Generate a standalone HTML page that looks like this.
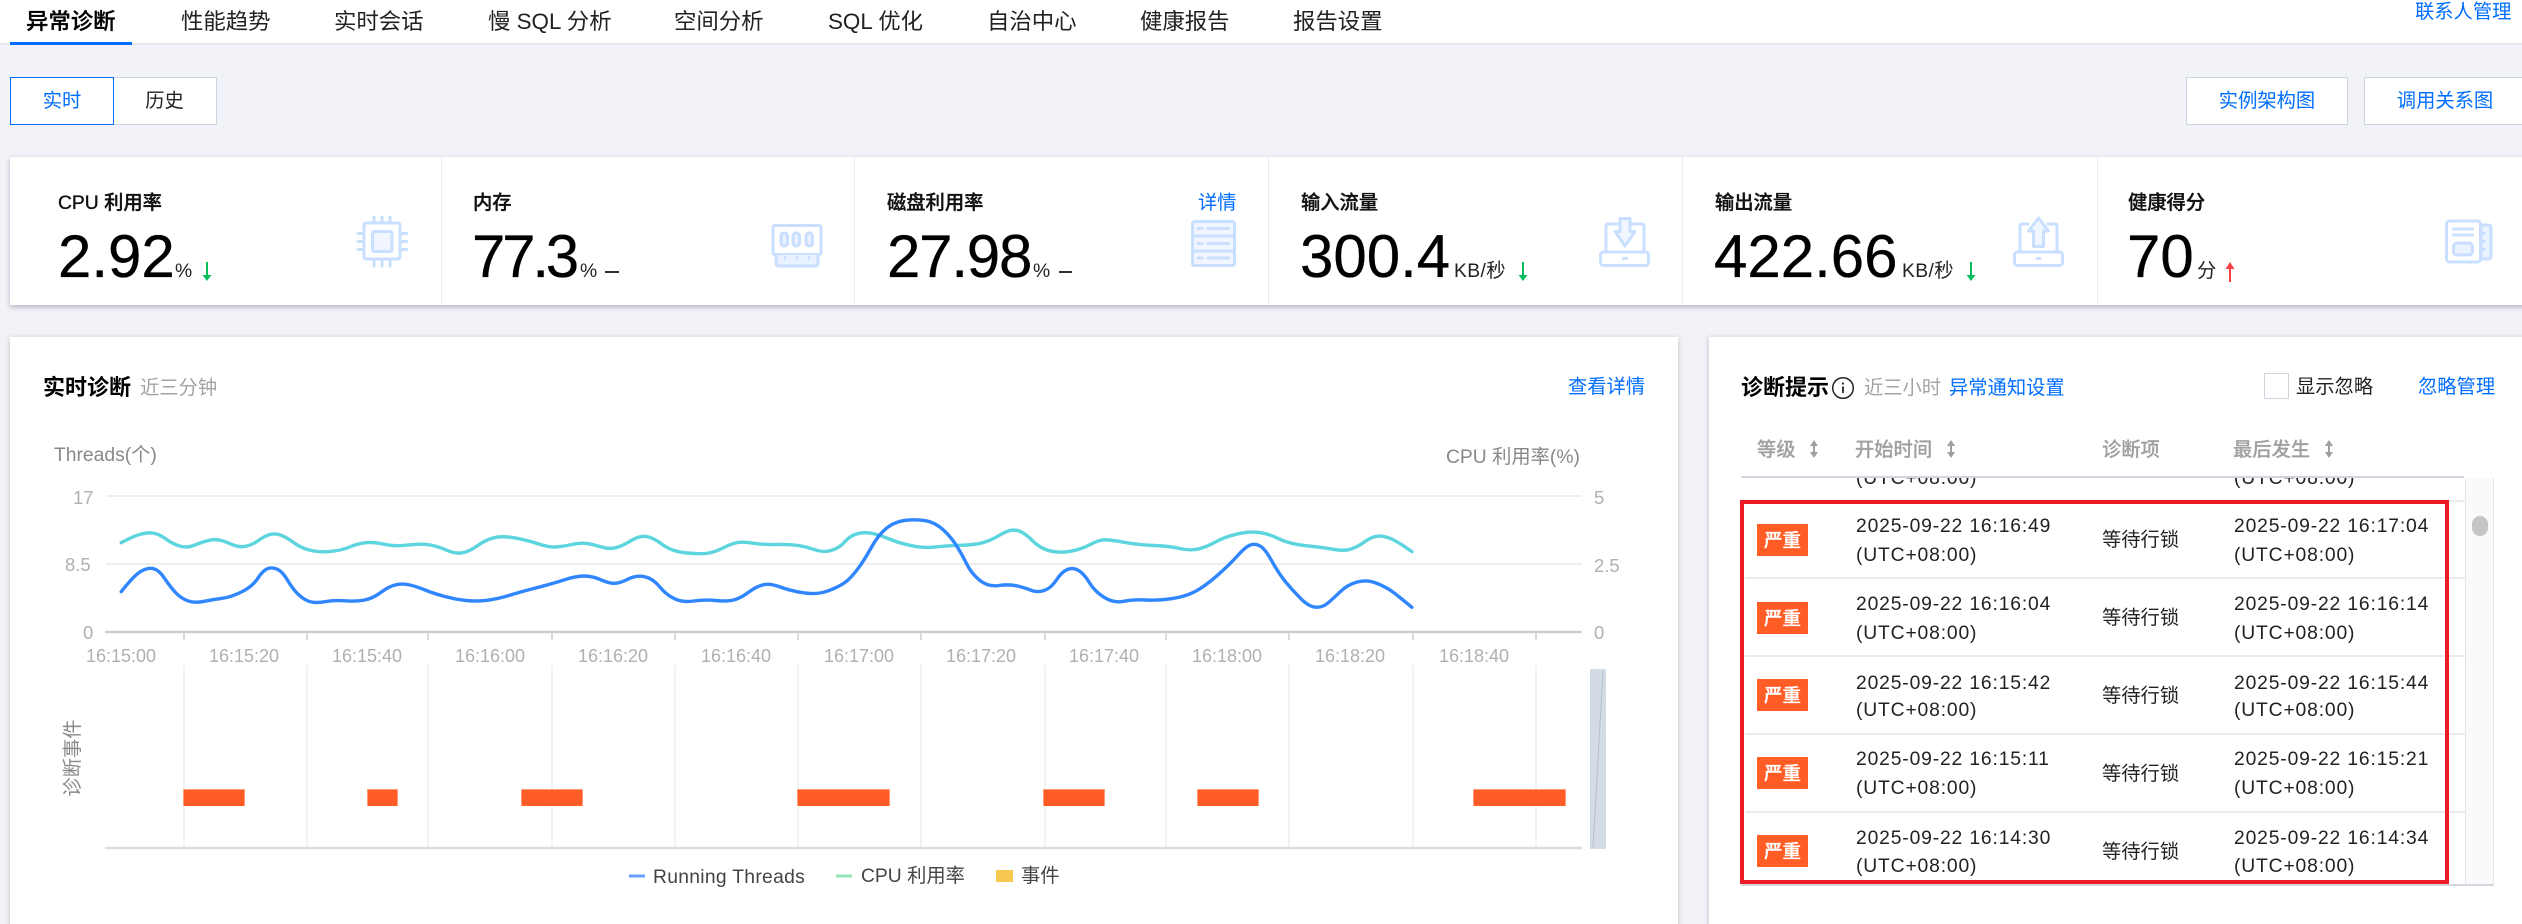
<!DOCTYPE html>
<html lang="zh-CN">
<head>
<meta charset="utf-8">
<title>异常诊断</title>
<style>
html,body{margin:0;padding:0;width:2522px;height:924px;overflow:hidden;background:#f2f3f8;}
body{position:relative;font-family:"Liberation Sans","Noto Sans CJK SC",sans-serif;color:#333;}
.b{position:absolute;box-sizing:border-box;}
.t{position:absolute;white-space:nowrap;line-height:24px;height:24px;font-size:19.3px;margin-top:1.5px;}
.nav{font-size:22.4px;line-height:30px;height:30px;top:5px;color:#222;}
.blue{color:#006eff;}
.gray{color:#a3a3a3;}
.title{font-weight:500;color:#111;-webkit-text-stroke:.35px #111;}
.big{font-size:60px;line-height:60px;height:60px;top:225px;color:#000;-webkit-text-stroke:.3px #000;}
.unit{top:258px;color:#222;}
.ax{font-size:18px;color:#b0b0b0;top:642px;text-align:center;width:100px;}
.yl{font-size:18.5px;color:#b0b0b0;}
.h{font-weight:500;color:#a0a0a0;top:437px;-webkit-text-stroke:.2px #a0a0a0;}
.d{color:#222;letter-spacing:.85px;}
.badge{position:absolute;left:1757px;width:51px;height:32px;background:#ff5c26;color:#fff;font-size:18.5px;font-weight:500;line-height:33px;text-align:center;-webkit-text-stroke:.3px #fff;}
.bar{position:absolute;top:789px;height:17px;background:#ff5c26;box-shadow:inset 0 1px 0 #ff9c7c,inset 1px 0 0 #ff9c7c,inset -1px 0 0 #ff9c7c;}
.sep{position:absolute;left:1745px;width:720px;height:2px;background:#e8ebf0;}
.btn{position:absolute;top:77px;height:48px;background:#fff;border:1.5px solid #cfd5de;text-align:center;line-height:47px;font-size:19.3px;box-sizing:border-box;}
</style>
</head>
<body>
<!-- nav -->
<div class="b" style="left:0;top:0;width:2522px;height:45px;background:#fff;border-bottom:2px solid #e6e8ed;"></div>
<div class="b" style="left:10px;top:42px;width:122px;height:3px;background:#006eff;"></div>
<span class="t nav" style="left:26px;font-weight:500;color:#000;-webkit-text-stroke:.3px #000;">异常诊断</span>
<span class="t nav" style="left:181px;">性能趋势</span>
<span class="t nav" style="left:334px;">实时会话</span>
<span class="t nav" style="left:488px;">慢 SQL 分析</span>
<span class="t nav" style="left:674px;">空间分析</span>
<span class="t nav" style="left:828px;">SQL 优化</span>
<span class="t nav" style="left:987px;">自治中心</span>
<span class="t nav" style="left:1140px;">健康报告</span>
<span class="t nav" style="left:1293px;">报告设置</span>
<span class="t blue" style="left:2415px;top:-1px;">联系人管理</span>

<!-- buttons -->
<div class="btn" style="left:112px;width:105px;color:#222;">历史</div>
<div class="btn blue" style="left:10px;width:104px;border:1.5px solid #006eff;">实时</div>
<div class="btn blue" style="left:2186px;width:162px;">实例架构图</div>
<div class="btn blue" style="left:2364px;width:162px;">调用关系图</div>

<!-- metric card -->
<div class="b" style="left:10px;top:157px;width:2530px;height:148px;background:#fff;box-shadow:0 2px 5px rgba(54,58,80,.35);"></div>
<div class="b" style="left:441px;top:157px;width:1px;height:148px;background:#e8ebf0;"></div>
<div class="b" style="left:854px;top:157px;width:1px;height:148px;background:#e8ebf0;"></div>
<div class="b" style="left:1268px;top:157px;width:1px;height:148px;background:#e8ebf0;"></div>
<div class="b" style="left:1682px;top:157px;width:1px;height:148px;background:#e8ebf0;"></div>
<div class="b" style="left:2097px;top:157px;width:1px;height:148px;background:#e8ebf0;"></div>

<span class="t title" style="left:58px;top:190px;">CPU 利用率</span>
<span class="t title" style="left:473px;top:190px;">内存</span>
<span class="t title" style="left:887px;top:190px;">磁盘利用率</span>
<span class="t blue" style="left:1198px;top:190px;">详情</span>
<span class="t title" style="left:1301px;top:190px;">输入流量</span>
<span class="t title" style="left:1715px;top:190px;">输出流量</span>
<span class="t title" style="left:2128px;top:190px;">健康得分</span>

<span class="t big" style="left:58px;">2.92</span><span class="t unit" style="left:175px;">%</span>
<span class="t big" style="left:472px;letter-spacing:-3.2px;">77.3</span><span class="t unit" style="left:580px;">%</span>
<span class="t big" style="left:887px;letter-spacing:-1.2px;">27.98</span><span class="t unit" style="left:1033px;">%</span>
<span class="t big" style="left:1300px;">300.4</span><span class="t unit" style="left:1454px;letter-spacing:.4px;">KB/秒</span>
<span class="t big" style="left:1714px;">422.66</span><span class="t unit" style="left:1902px;letter-spacing:.4px;">KB/秒</span>
<span class="t big" style="left:2127px;">70</span><span class="t unit" style="left:2197px;">分</span>
<div class="b" style="left:605px;top:271px;width:14px;height:2px;background:#333;"></div>
<div class="b" style="left:1059px;top:271px;width:13px;height:2px;background:#333;"></div>

<svg class="b" style="left:0;top:0;" width="2522" height="924" viewBox="0 0 2522 924" fill="none">
  <!-- arrows -->
  <g stroke="#0abf5b" stroke-width="2" fill="#0abf5b">
    <path d="M207 262V276"/><path d="M202.500 275h9l-4.500 6z" stroke="none"/>
    <path d="M1523 262V276"/><path d="M1518.500 275h9l-4.500 6z" stroke="none"/>
    <path d="M1971 262V276"/><path d="M1966.500 275h9l-4.500 6z" stroke="none"/>
  </g>
  <g stroke="#f64041" stroke-width="2" fill="#f64041">
    <path d="M2230 268V282"/><path d="M2225.500 269h9l-4.500 -7z" stroke="none"/>
  </g>
  <!-- CPU icon -->
  <g stroke="#c9dfff" stroke-width="3" stroke-linecap="round" stroke-linejoin="round">
    <rect x="364" y="223" width="36" height="36" rx="2"/>
    <rect x="372.500" y="231.500" width="19.500" height="20" rx="2" fill="#f0f5ff"/>
    <path d="M374 217v5M382 217v5M390 217v5M374 261v5M382 261v5M390 261v5M358 233.500h5M358 241.500h5M358 249.500h5M402 233.500h5M402 241.500h5M402 249.500h5"/>
  </g>
  <!-- memory icon -->
  <g stroke="#c9dfff" stroke-width="3" stroke-linejoin="round">
    <rect x="773" y="225.500" width="48" height="29" rx="2"/>
    <path d="M776 255v8q0 3 3 3h36q3 0 3-3v-8" fill="#e8f1ff"/>
    <rect x="781" y="233" width="6.500" height="13" rx="3" fill="#e8f1ff"/>
    <rect x="793" y="233" width="6.500" height="13" rx="3" fill="#e8f1ff"/>
    <rect x="806" y="233" width="6.500" height="13" rx="3" fill="#e8f1ff"/>
    <path d="M785 256v4M797 256v4M809 256v4" stroke-width="2"/>
  </g>
  <!-- disk icon -->
  <g stroke="#c9dfff" stroke-width="3" stroke-linejoin="round" stroke-linecap="round">
    <rect x="1192.500" y="221.500" width="42" height="44" rx="2" fill="#f0f5ff"/>
    <path d="M1193 236h41M1193 251h41"/>
    <path d="M1198 228.500h4M1208 228.500h21M1198 243.500h4M1208 243.500h21M1198 258h4M1208 258h21"/>
  </g>
  <!-- input icon -->
  <g stroke="#c9dfff" stroke-width="3" stroke-linejoin="round" stroke-linecap="round">
    <rect x="1600.500" y="252" width="48" height="13.500" rx="3"/>
    <path d="M1618 224h-10q-2 0-2 2v26M1632 224h10q2 0 2 2v26"/>
    <path d="M1620 218.500h10v13h5l-10 14.500-10-14.500h5z" fill="#f0f5ff"/>
    <path d="M1623.500 258.500h3"/>
  </g>
  <!-- output icon -->
  <g stroke="#c9dfff" stroke-width="3" stroke-linejoin="round" stroke-linecap="round">
    <rect x="2014.500" y="252" width="48" height="13.500" rx="3"/>
    <path d="M2028 224h-6q-2 0-2 2v26M2048 224h7q2 0 2 2v26"/>
    <path d="M2038.500 218l10 13h-5v15.500h-10v-15.500h-5z" fill="#f0f5ff"/>
    <path d="M2037 258.500h3"/>
  </g>
  <!-- health icon -->
  <g stroke="#c9dfff" stroke-width="3" stroke-linejoin="round" stroke-linecap="round">
    <path d="M2481 225h7q3 0 3 3v28q0 3-3 3h-7z" fill="#eaf2ff"/>
    <rect x="2446.500" y="221" width="34" height="41" rx="3"/>
    <path d="M2453.500 229h19M2453.500 235h19"/>
    <rect x="2453.500" y="243" width="19" height="12" rx="3.500" fill="#eaf2ff"/>
    <path d="M2481 233.500h3M2481 241.500h3M2481 249.500h3"/>
  </g>
</svg>

<!-- left panel -->
<div class="b" style="left:10px;top:337px;width:1668px;height:600px;background:#fff;box-shadow:0 1px 5px rgba(54,58,80,.3);"></div>
<span class="t title" style="left:43px;top:374px;font-size:22px;font-weight:700;color:#000;-webkit-text-stroke:0;">实时诊断</span>
<span class="t gray" style="left:140px;top:375px;">近三分钟</span>
<span class="t blue" style="left:1568px;top:374px;">查看详情</span>
<span class="t" style="left:54px;top:442px;color:#888;">Threads(个)</span>
<span class="t" style="left:1446px;top:444px;color:#888;">CPU 利用率(%)</span>
<span class="t yl" style="left:73px;top:484px;">17</span>
<span class="t yl" style="left:65px;top:551px;">8.5</span>
<span class="t yl" style="left:83px;top:619px;">0</span>
<span class="t yl" style="left:1594px;top:484px;">5</span>
<span class="t yl" style="left:1594px;top:552px;">2.5</span>
<span class="t yl" style="left:1594px;top:619px;">0</span>
<span class="t ax" style="left:71px;">16:15:00</span>
<span class="t ax" style="left:194px;">16:15:20</span>
<span class="t ax" style="left:317px;">16:15:40</span>
<span class="t ax" style="left:440px;">16:16:00</span>
<span class="t ax" style="left:563px;">16:16:20</span>
<span class="t ax" style="left:686px;">16:16:40</span>
<span class="t ax" style="left:809px;">16:17:00</span>
<span class="t ax" style="left:931px;">16:17:20</span>
<span class="t ax" style="left:1054px;">16:17:40</span>
<span class="t ax" style="left:1177px;">16:18:00</span>
<span class="t ax" style="left:1300px;">16:18:20</span>
<span class="t ax" style="left:1424px;">16:18:40</span>

<svg class="b" style="left:0;top:0;" width="2522" height="924" viewBox="0 0 2522 924" fill="none">
  <path d="M106 496H1582M106 564H1582" stroke="#eeeeee" stroke-width="2"/>
  <path d="M105 632H1582" stroke="#cfcfcf" stroke-width="2.500"/>
  <path d="M184 632v8M307 632v8M428 632v8M552 632v8M675 632v8M798 632v8M921 632v8M1045 632v8M1166 632v8M1289 632v8M1413 632v8M1536 632v8" stroke="#cfcfcf" stroke-width="1.500"/>
  <path d="M184 665V848M307 665V848M428 665V848M552 665V848M675 665V848M798 665V848M921 665V848M1045 665V848M1166 665V848M1289 665V848M1413 665V848M1536 665V848" stroke="#eeeeee" stroke-width="1.500"/>
  <path d="M105 848H1582" stroke="#dcdcdc" stroke-width="2.500"/>
  <g transform="translate(0,330) scale(.5485,.33333)" stroke-width="3.400" stroke-linejoin="round" stroke-linecap="round">
    <path vector-effect="non-scaling-stroke" stroke="#5dd5de" d="M221 638Q245 617 257.500 612Q270 607 280 609.500Q290 612 302.500 627Q315 642 327.500 648Q340 654 350 648Q360 642 372.500 635Q385 628 395 629Q405 630 420 641.500Q435 653 447.500 649Q460 645 472.500 630Q485 615 495 612.500Q505 610 515 617.500Q525 625 537.500 640Q550 655 567.500 661.500Q585 668 605 664Q625 660 637.500 651Q650 642 665 638.500Q680 635 700 642.500Q720 650 745 645Q770 640 785 645Q800 650 815 661Q830 672 842.500 668.500Q855 665 870 647.500Q885 630 900 623.500Q915 617 937.500 623.500Q960 630 980 641Q1000 652 1012.500 651Q1025 650 1042.500 643.500Q1060 637 1072.500 641Q1085 645 1097.500 651.500Q1110 658 1122.500 653Q1135 648 1150 632.500Q1165 617 1177.500 619.500Q1190 622 1207.500 643.500Q1225 665 1252.500 669Q1280 673 1292.500 669Q1305 665 1320 652.500Q1335 640 1345 637.500Q1355 635 1372.500 639.500Q1390 644 1415 643.500Q1440 643 1455 646.500Q1470 650 1485 659Q1500 668 1515 661.500Q1530 655 1540.500 635Q1551 615 1566 610Q1581 605 1596 612.500Q1611 620 1626 630Q1641 640 1663.500 647.500Q1686 655 1706 651Q1726 647 1751 646Q1776 645 1791 638.500Q1806 632 1823.500 614.500Q1841 597 1853.500 601Q1866 605 1881 630Q1896 655 1913.500 662.500Q1931 670 1951 664Q1971 658 1986 645Q2001 632 2011 630Q2021 628 2048.500 636.500Q2076 645 2103.500 646.500Q2131 648 2151 655.500Q2171 663 2186 656.500Q2201 650 2216 636Q2231 622 2253.500 613Q2276 604 2293.500 607Q2311 610 2331 626Q2351 642 2381 647Q2411 652 2431 658Q2451 664 2463.500 657Q2476 650 2488.500 635Q2501 620 2511 618.500Q2521 617 2533.500 624.500Q2546 632 2574 665"/>
    <path vector-effect="non-scaling-stroke" stroke="#2f86ff" d="M221 785Q245 735 257.500 723.500Q270 712 280 716Q290 720 300 745Q310 770 320 787.500Q330 805 342.500 812.500Q355 820 372.500 814Q390 808 405 805Q420 802 440 786Q460 770 470 745Q480 720 488.500 715.500Q497 711 506 718Q515 725 525 752.500Q535 780 545 795Q555 810 565 815Q575 820 592.500 815Q610 810 630 812.500Q650 815 665 810Q680 805 695 786.500Q710 768 722.500 764Q735 760 747.500 765Q760 770 775 780Q790 790 810 799Q830 808 850 811.500Q870 815 890 810.500Q910 806 930 795.500Q950 785 980 772.500Q1010 760 1030 749Q1050 738 1065 738Q1080 738 1095 749Q1110 760 1120 760Q1130 760 1145 747.500Q1160 735 1175 740Q1190 745 1202.500 770Q1215 795 1230 806.500Q1245 818 1265 813Q1285 808 1305 811.500Q1325 815 1337.500 810Q1350 805 1365 786.500Q1380 768 1392.500 764Q1405 760 1422.500 771Q1440 782 1465 788.500Q1490 795 1510 782.500Q1530 770 1540.500 757.500Q1551 745 1563.500 717.500Q1576 690 1588.500 652.500Q1601 615 1616 595Q1631 575 1651 571Q1671 567 1688.500 572.500Q1706 578 1721 601.500Q1736 625 1746 652.500Q1756 680 1763.500 705Q1771 730 1786 750.500Q1801 771 1821 766.500Q1841 762 1856 768.500Q1871 775 1881 781.500Q1891 788 1903.500 781.500Q1916 775 1926 750Q1936 725 1946 718.500Q1956 712 1966 721Q1976 730 1986 757.500Q1996 785 2013.500 802.500Q2031 820 2048.500 814Q2066 808 2088.500 810Q2111 812 2136 806Q2161 800 2178.500 785Q2196 770 2218.500 737.500Q2241 705 2256 677.500Q2271 650 2279.500 645Q2288 640 2297 647.500Q2306 655 2318.500 692.500Q2331 730 2343.500 755Q2356 780 2371 805Q2386 830 2398.500 831.500Q2411 833 2421 819Q2431 805 2443.500 785Q2456 765 2473.500 756.500Q2491 748 2508.500 759Q2526 770 2538.500 785Q2551 800 2574 832"/>
  </g>
  <rect x="1590" y="669" width="16" height="180" fill="#d3dbe5"/>
  <path d="M1603 671L1593 847" stroke="#b4bfcc" stroke-width="1"/>
  <path d="M629 876h16" stroke="#6a9eff" stroke-width="3"/>
  <path d="M836 876h16" stroke="#95e3b8" stroke-width="3"/>
  <rect x="996" y="870" width="17" height="12" fill="#f6c84f"/>
</svg>
<div class="bar" style="left:183px;width:62px;"></div>
<div class="bar" style="left:367px;width:31px;"></div>
<div class="bar" style="left:521px;width:62px;"></div>
<div class="bar" style="left:797px;width:93px;"></div>
<div class="bar" style="left:1043px;width:62px;"></div>
<div class="bar" style="left:1197px;width:62px;"></div>
<div class="bar" style="left:1473px;width:93px;"></div>
<span class="t" style="left:34px;top:744px;width:80px;text-align:center;color:#888;transform:rotate(-90deg);">诊断事件</span>
<span class="t" style="left:653px;top:864px;color:#444;letter-spacing:.3px;">Running Threads</span>
<span class="t" style="left:861px;top:863px;color:#444;">CPU 利用率</span>
<span class="t" style="left:1021px;top:863px;color:#444;">事件</span>

<!-- right panel -->
<div class="b" style="left:1709px;top:337px;width:830px;height:600px;background:#fff;box-shadow:0 1px 5px rgba(54,58,80,.3);"></div>
<span class="t title" style="left:1741px;top:374px;font-size:22px;font-weight:700;color:#000;-webkit-text-stroke:0;">诊断提示</span>
<svg class="b" style="left:1830px;top:376px;" width="26" height="26" viewBox="0 0 26 26" fill="none"><circle cx="13" cy="12" r="10.300" stroke="#222" stroke-width="1.500"/><path d="M13 10.500V17M13 6.500v2" stroke="#222" stroke-width="1.800"/></svg>
<span class="t gray" style="left:1864px;top:375px;">近三小时</span>
<span class="t blue" style="left:1949px;top:375px;">异常通知设置</span>
<div class="b" style="left:2264px;top:373px;width:25px;height:26px;border:1.500px solid #cfd5de;background:#fff;"></div>
<span class="t" style="left:2296px;top:374px;color:#222;">显示忽略</span>
<span class="t blue" style="left:2418px;top:374px;">忽略管理</span>

<span class="t h" style="left:1757px;">等级</span>
<span class="t h" style="left:1855px;">开始时间</span>
<span class="t h" style="left:2102px;">诊断项</span>
<span class="t h" style="left:2233px;">最后发生</span>
<svg class="b" style="left:0;top:0;" width="2522" height="924" viewBox="0 0 2522 924" fill="none">
  <g stroke="#a0a0a0" stroke-width="2" fill="#a0a0a0">
    <path d="M1814 444V454"/><path d="M1810 446l4-6 4 6zM1810 452l4 6 4-6z" stroke="none"/>
    <path d="M1951 444V454"/><path d="M1947 446l4-6 4 6zM1947 452l4 6 4-6z" stroke="none"/>
    <path d="M2329 444V454"/><path d="M2325 446l4-6 4 6zM2325 452l4 6 4-6z" stroke="none"/>
  </g>
</svg>

<div class="b" style="left:2465px;top:478px;width:29px;height:407px;background:#fafafa;border-left:1.500px solid #e6e6e6;border-right:1.500px solid #e6e6e6;"></div>
<div class="b" style="left:2472px;top:516px;width:16px;height:20px;background:#c4c4c4;border-radius:8px;"></div>

<!-- clipped previous row -->
<div class="b" style="left:1850px;top:478px;width:600px;height:12px;overflow:hidden;">
  <span class="t d" style="left:6px;top:-13px;">(UTC+08:00)</span>
  <span class="t d" style="left:384px;top:-13px;">(UTC+08:00)</span>
</div>

<div class="b" style="left:1741px;top:476px;width:723px;height:2px;background:#cfd5de;"></div>
<div class="b" style="left:1741px;top:884px;width:753px;height:2px;background:#d5dae2;"></div>
<div class="sep" style="top:500px;"></div>
<div class="sep" style="top:577px;"></div>
<div class="sep" style="top:655px;"></div>
<div class="sep" style="top:733px;"></div>
<div class="sep" style="top:811px;"></div>

<div class="badge" style="top:524px;">严重</div>
<span class="t d" style="left:1856px;top:513px;">2025-09-22 16:16:49</span>
<span class="t d" style="left:1856px;top:542px;">(UTC+08:00)</span>
<span class="t" style="left:2102px;top:527px;color:#222;">等待行锁</span>
<span class="t d" style="left:2234px;top:513px;">2025-09-22 16:17:04</span>
<span class="t d" style="left:2234px;top:542px;">(UTC+08:00)</span>

<div class="badge" style="top:602px;">严重</div>
<span class="t d" style="left:1856px;top:591px;">2025-09-22 16:16:04</span>
<span class="t d" style="left:1856px;top:620px;">(UTC+08:00)</span>
<span class="t" style="left:2102px;top:605px;color:#222;">等待行锁</span>
<span class="t d" style="left:2234px;top:591px;">2025-09-22 16:16:14</span>
<span class="t d" style="left:2234px;top:620px;">(UTC+08:00)</span>

<div class="badge" style="top:679px;">严重</div>
<span class="t d" style="left:1856px;top:670px;">2025-09-22 16:15:42</span>
<span class="t d" style="left:1856px;top:697px;">(UTC+08:00)</span>
<span class="t" style="left:2102px;top:683px;color:#222;">等待行锁</span>
<span class="t d" style="left:2234px;top:670px;">2025-09-22 16:15:44</span>
<span class="t d" style="left:2234px;top:697px;">(UTC+08:00)</span>

<div class="badge" style="top:757px;">严重</div>
<span class="t d" style="left:1856px;top:746px;">2025-09-22 16:15:11</span>
<span class="t d" style="left:1856px;top:775px;">(UTC+08:00)</span>
<span class="t" style="left:2102px;top:761px;color:#222;">等待行锁</span>
<span class="t d" style="left:2234px;top:746px;">2025-09-22 16:15:21</span>
<span class="t d" style="left:2234px;top:775px;">(UTC+08:00)</span>

<div class="badge" style="top:835px;">严重</div>
<span class="t d" style="left:1856px;top:825px;">2025-09-22 16:14:30</span>
<span class="t d" style="left:1856px;top:853px;">(UTC+08:00)</span>
<span class="t" style="left:2102px;top:839px;color:#222;">等待行锁</span>
<span class="t d" style="left:2234px;top:825px;">2025-09-22 16:14:34</span>
<span class="t d" style="left:2234px;top:853px;">(UTC+08:00)</span>

<!-- red annotation box -->
<div class="b" style="left:1740px;top:500px;width:709px;height:384px;border:4px solid #ed1c24;"></div>
</body>
</html>
